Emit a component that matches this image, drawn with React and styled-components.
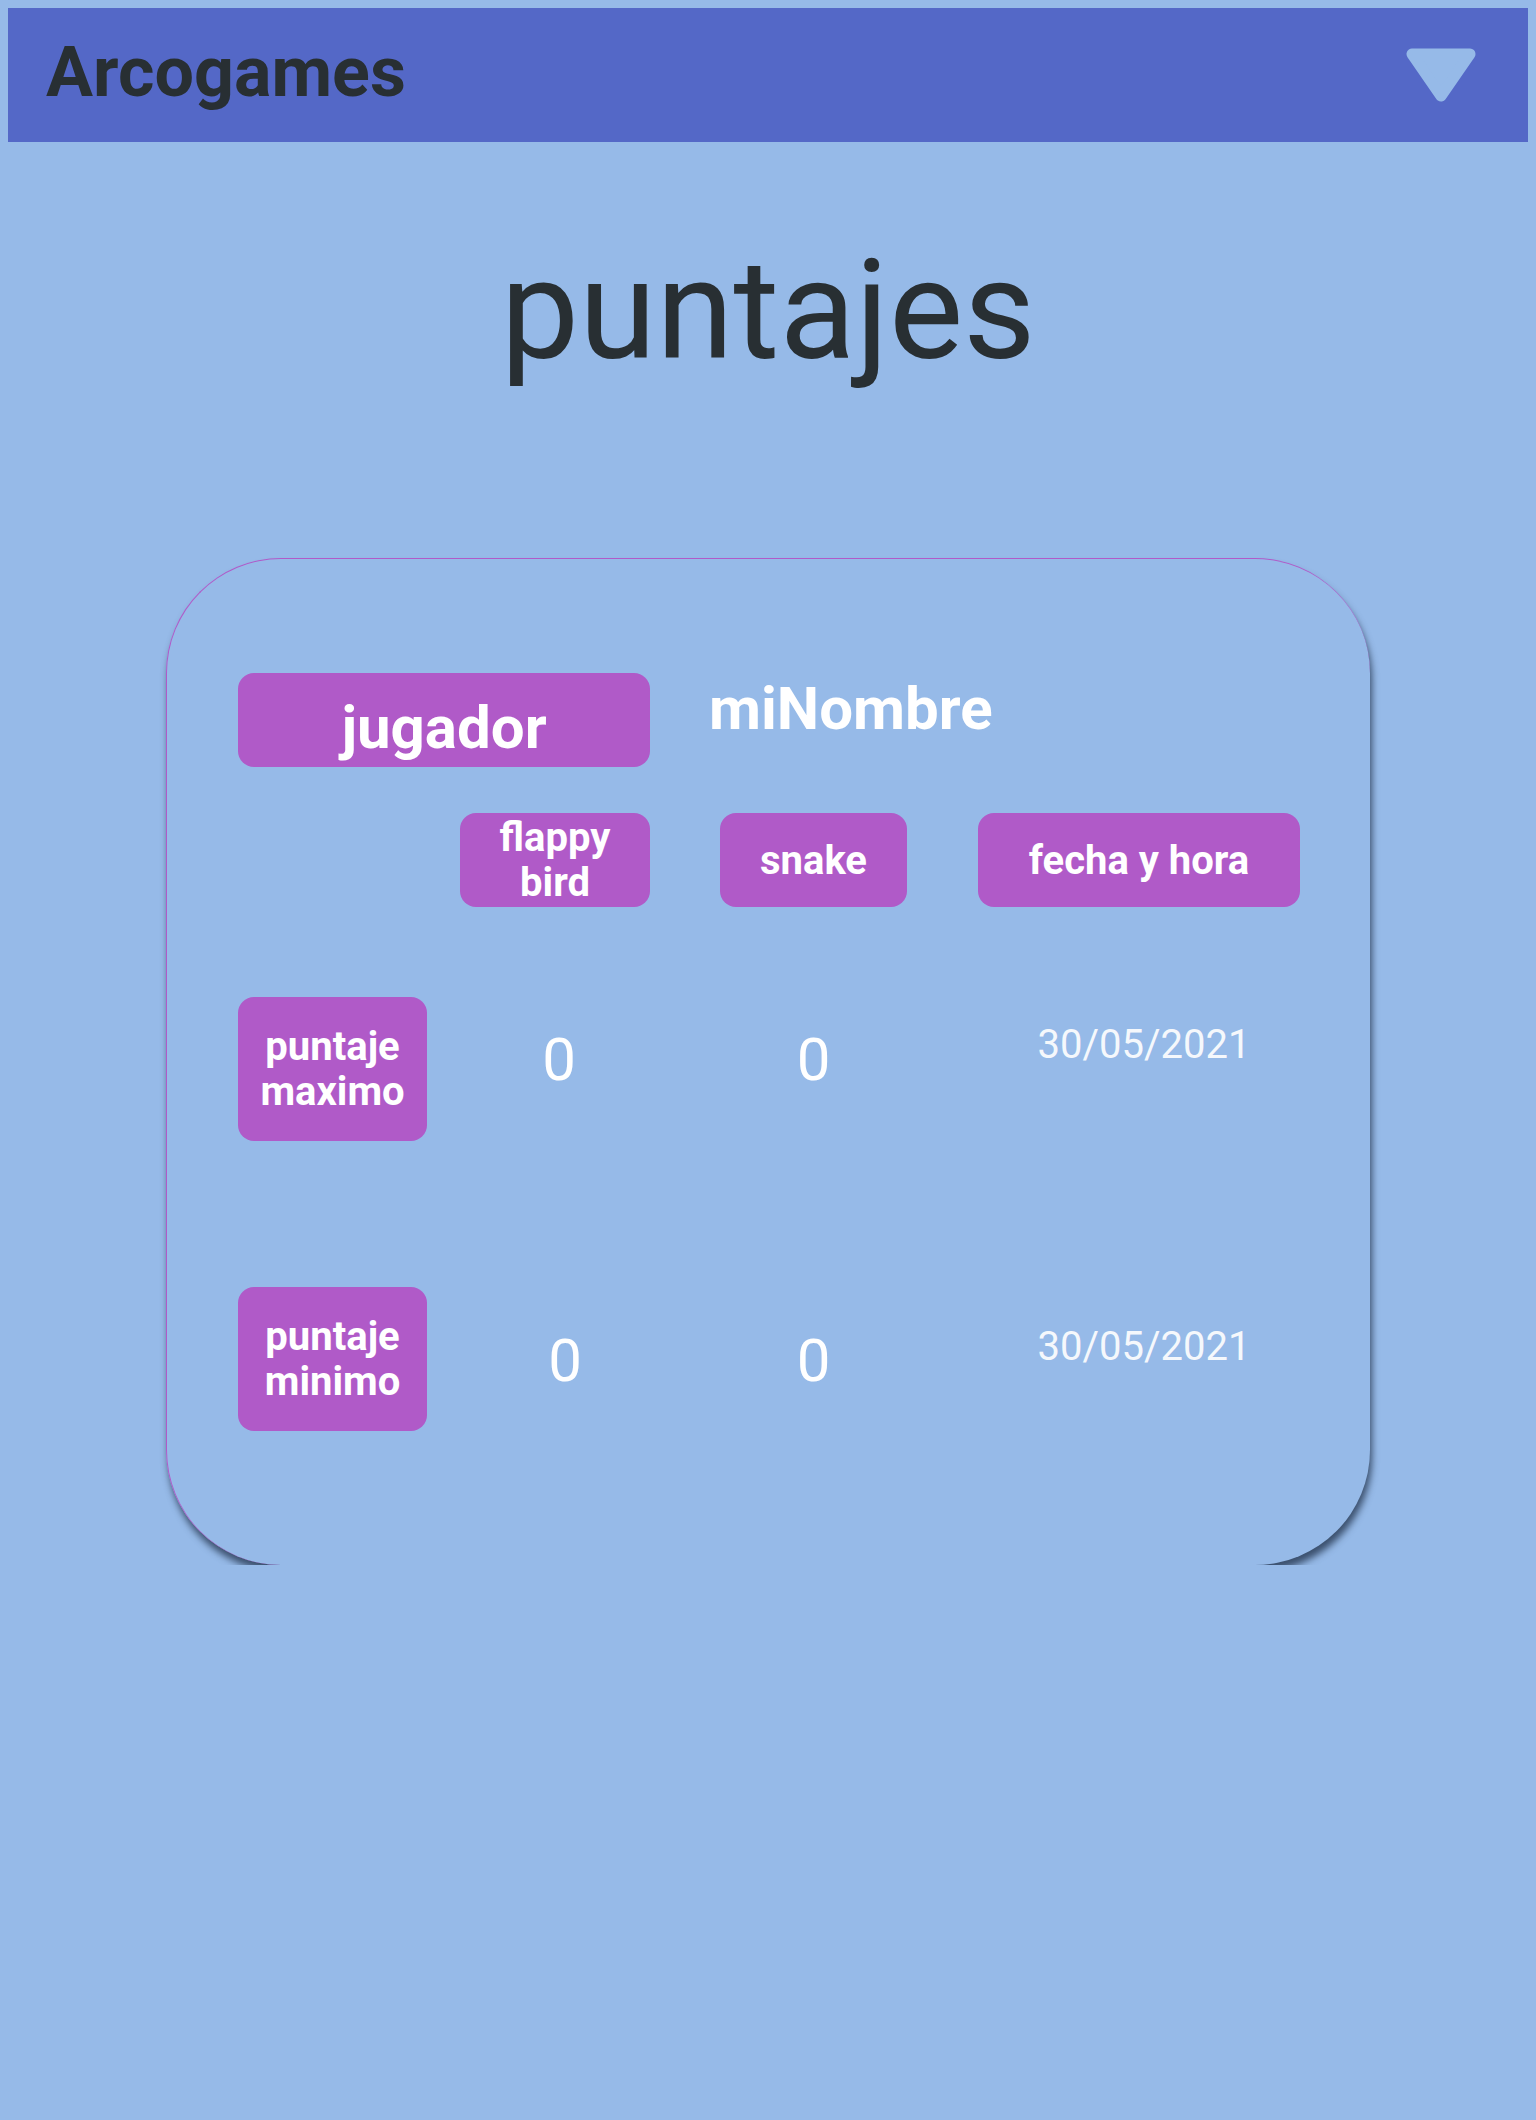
import React from 'react';
import styled, { createGlobalStyle } from 'styled-components';

const GlobalStyle = createGlobalStyle`
  html, body {
    background: #96bae8;
  }
  body {
    margin: 8px;
    font-family: Roboto, 'Noto Sans', sans-serif;
    color: #282f33;
  }
`;

const rows = [
  { label: 'puntaje maximo', flappy: 0, snake: 0, date: '30/05/2021', pad: 27, datePad: 24, shift: 8 },
  { label: 'puntaje minimo', flappy: 0, snake: 0, date: '30/05/2021', pad: 38, datePad: 36, shift: 20 },
];

const App = () => {
  return (
    <>
      <GlobalStyle />
      <Navbar>
        <Brand>Arcogames</Brand>
        <MenuToggle aria-label="menu">
          <svg width="70" height="54" viewBox="0 0 70 54">
            <polygon
              points="6,6 64,6 35,48"
              fill="#96bae8"
              stroke="#96bae8"
              strokeWidth="11"
              strokeLinejoin="round"
            />
          </svg>
        </MenuToggle>
      </Navbar>

      <Title>puntajes</Title>

      <Card>
        <PlayerRow>
          <Tag $width={412} $height={94} $size={60} $padTop={19}>
            jugador
          </Tag>
          <PlayerName>miNombre</PlayerName>
        </PlayerRow>

        <Row $top={46}>
          <span />
          <Tag $width={190} $height={94}>flappy bird</Tag>
          <Tag $width={187} $height={94}>snake</Tag>
          <Tag $width={322} $height={94}>fecha y hora</Tag>
        </Row>

        {rows.map((r, i) => (
          <Row key={i} $top={i === 0 ? 90 : 146}>
            <Tag $width={189} $height={144}>{r.label}</Tag>
            <Score $width={190} $pad={r.pad} $shift={r.shift}>
              {r.flappy}
            </Score>
            <Score $width={187} $pad={r.pad}>
              {r.snake}
            </Score>
            <DateCell $width={322} $pad={r.datePad}>
              {r.date}
            </DateCell>
          </Row>
        ))}
      </Card>
    </>
  );
};

const Navbar = styled.header`
  display: flex;
  align-items: center;
  justify-content: space-between;
  height: 134px;
  box-sizing: border-box;
  padding: 0 52px 6px 38px;
  background: #5468c7;
`;

const Brand = styled.h2`
  margin: 0;
  font-size: 70px;
  font-weight: 700;
  color: #282f33;
`;

const MenuToggle = styled.div`
  display: flex;
  padding-top: 6px;
  cursor: pointer;
`;

const Title = styled.h1`
  margin: 86px 0 165px;
  text-align: center;
  font-size: 140px;
  font-weight: 400;
  line-height: 165px;
  color: #282f33;
`;

const Card = styled.section`
  width: 1204px;
  box-sizing: border-box;
  margin: 0 auto;
  padding: 114px 70px 134px 71px;
  border-top: 1px solid #b05ac8;
  border-left: 1px solid #b05ac8;
  border-radius: 115px;
  box-shadow: 2px 7px 7px rgba(30, 45, 70, 0.75);
`;

const PlayerRow = styled.div`
  display: flex;
  align-items: flex-start;
  gap: 59px;
`;

const PlayerName = styled.div`
  font-size: 60px;
  font-weight: 700;
  color: #fff;
`;

const Row = styled.div`
  display: grid;
  grid-template-columns: 222px 260px 258px 322px;
  align-items: start;
  margin-top: ${(p) => p.$top}px;
`;

const Tag = styled.div`
  display: flex;
  align-items: ${(p) => (p.$padTop ? 'flex-start' : 'center')};
  justify-content: center;
  width: ${(p) => p.$width}px;
  height: ${(p) => p.$height}px;
  box-sizing: border-box;
  padding: ${(p) => (p.$padTop ? `${p.$padTop}px 0 0` : '0 14px')};
  background: #b05ac8;
  border-radius: 16px;
  color: #fff;
  font-size: ${(p) => p.$size || 40}px;
  font-weight: 700;
  line-height: ${(p) => (p.$size ? 'normal' : '45px')};
  text-align: center;
`;

const Score = styled.div`
  width: ${(p) => p.$width}px;
  box-sizing: border-box;
  padding-top: ${(p) => p.$pad}px;
  padding-left: ${(p) => p.$shift || 0}px;
  text-align: center;
  font-size: 60px;
  color: #fff;
`;

const DateCell = styled.div`
  width: ${(p) => p.$width}px;
  box-sizing: border-box;
  padding-top: ${(p) => p.$pad}px;
  padding-left: 10px;
  text-align: center;
  font-size: 40px;
  color: #f5f8fc;
`;

export default App;
